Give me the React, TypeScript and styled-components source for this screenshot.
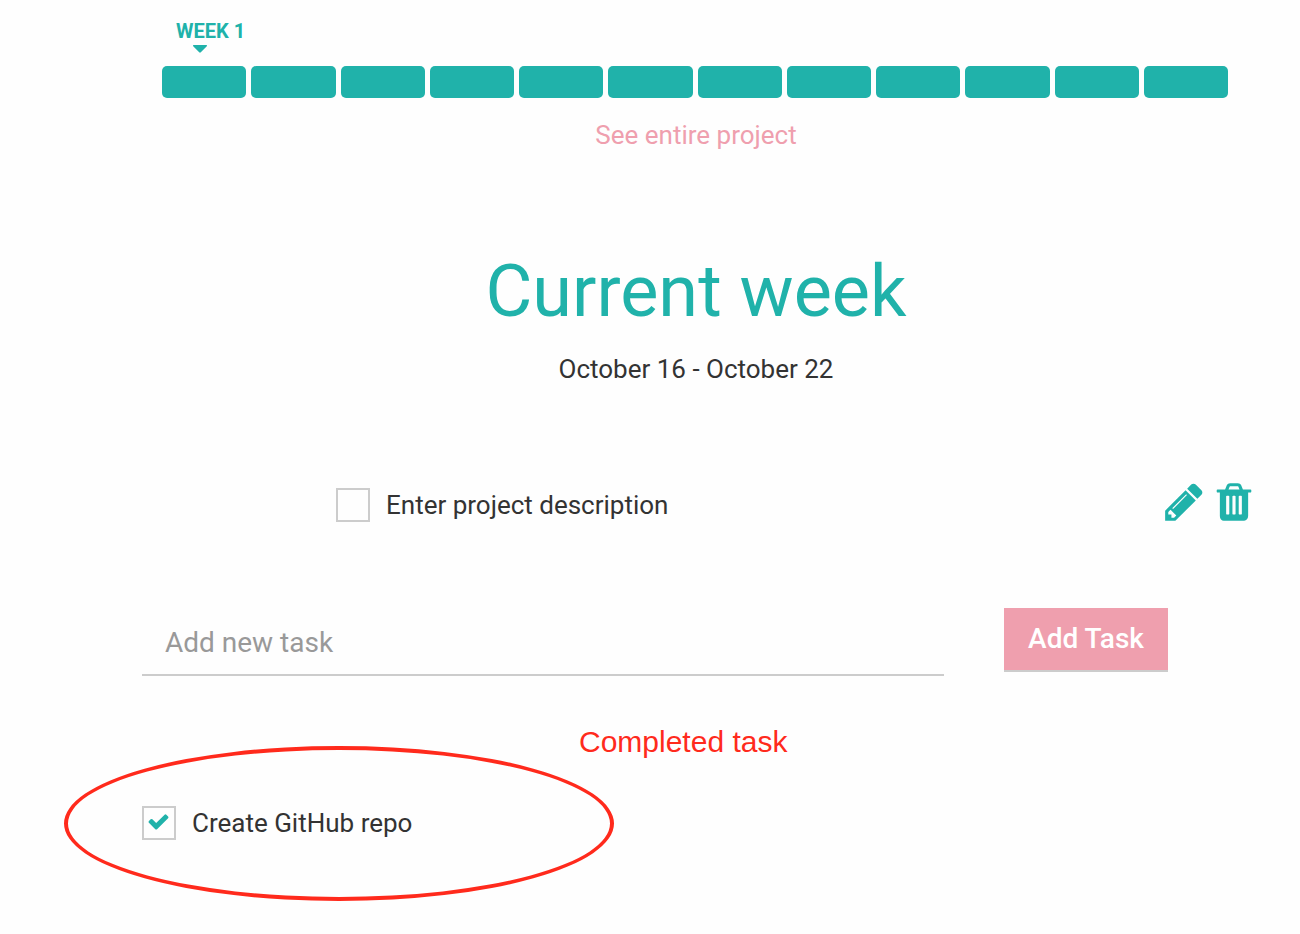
import React, { useState } from "react";
import styled, { createGlobalStyle } from "styled-components";

const teal = "#20b2aa";
const pink = "#ef9fae";
const red = "#ff2a1c";
const rule = "#cccccc";

const GlobalStyle = createGlobalStyle`
  * {
    box-sizing: border-box;
  }
  body {
    margin: 0;
    background: #fefefe;
    color: #333333;
    font-family: Roboto, "Liberation Sans", sans-serif;
    font-size: 26px;
    line-height: 32px;
  }
`;

const Page = styled.main`
  display: flex;
  flex-direction: column;
  padding: 18px 0 92px 92px;
`;

const Timeline = styled.section`
  padding: 0 72px 0 70px;
`;

const WeekMarker = styled.div`
  display: flex;
  flex-direction: column;
  align-items: flex-start;
  height: 48px;
  padding-left: 14px;
  color: ${teal};
  font-size: 20px;
  font-weight: 700;
  line-height: 26px;
`;

const Caret = styled.svg`
  width: 16px;
  height: 9px;
  margin-left: 16px;
  fill: ${teal};
`;

const Weeks = styled.div`
  display: grid;
  grid-template-columns: repeat(12, 1fr);
  gap: 5px;
`;

const WeekBar = styled.button`
  height: 32px;
  padding: 0;
  border: 0;
  border-radius: 5px;
  background: ${teal};
`;

const ProjectLink = styled.a`
  align-self: center;
  margin-top: 21px;
  color: ${pink};
  text-decoration: none;
`;

const WeekHeader = styled.header`
  margin-top: 99px;
  text-align: center;
`;

const Title = styled.h1`
  margin: 0;
  color: ${teal};
  font-size: 72px;
  font-weight: 400;
  line-height: 84px;
`;

const Dates = styled.p`
  margin: 19px 0 0;
`;

const TaskRow = styled.div`
  display: flex;
  justify-content: space-between;
  margin: 95px 44px 0 244px;
`;

const Actions = styled.div`
  display: flex;
  gap: 6px;
`;

const IconButton = styled.button`
  display: block;
  width: 44px;
  height: 44px;
  padding: 0;
  border: 0;
  background: none;
  color: ${teal};
`;

const Glyph = styled.svg`
  display: block;
  width: 100%;
  height: 100%;
  fill: currentColor;
`;

const TaskLabel = styled.label<{ $lowered?: boolean }>`
  display: flex;
  gap: 16px;
  height: 34px;
  margin-top: ${(p) => (p.$lowered ? "8px" : "0")};
  line-height: 34px;
`;

const BoxFrame = styled.span`
  display: grid;
  place-items: center;
  width: 34px;
  height: 34px;

  > * {
    grid-area: 1 / 1;
  }
`;

const Box = styled.input`
  appearance: none;
  width: 34px;
  height: 34px;
  margin: 0;
  border: 2px solid ${rule};
  background: transparent;
`;

const CheckMark = styled.svg`
  width: 23px;
  height: 23px;
  margin: 0 2px 3px 0;
  fill: ${teal};
  pointer-events: none;
`;

const AddForm = styled.form`
  display: flex;
  align-items: flex-start;
  gap: 60px;
  margin: 84px 132px 0 50px;
`;

const TaskInput = styled.input`
  flex: 1;
  min-width: 0;
  height: 68px;
  padding: 2px 23px 0;
  border: 0;
  border-bottom: 2px solid ${rule};
  outline: 0;
  background: transparent;
  color: #333333;
  font: 400 28px Roboto, sans-serif;

  &::placeholder {
    color: #999999;
    opacity: 1;
  }
`;

const AddButton = styled.button`
  width: 164px;
  height: 64px;
  padding: 0 0 2px;
  border: 0;
  border-bottom: 2px solid ${rule};
  background: ${pink};
  color: #ffffff;
  font: 500 28px Roboto, sans-serif;
`;

const CompletedNote = styled.p`
  margin: 50px 0 0 487px;
  color: ${red};
  font-family: "Liberation Sans", Arial, sans-serif;
  font-size: 30px;
`;

const Completed = styled.section`
  position: relative;
  margin: 48px 0 0 50px;
`;

const Highlight = styled.div`
  position: absolute;
  top: -60px;
  left: -78px;
  width: 550px;
  height: 155px;
  border: 4px solid ${red};
  border-radius: 50%;
  pointer-events: none;
`;

const pencil =
  "M491 1536l91-91-235-235-91 91v107h128v128h107zm523-928q0-22-22-22-10 0-17 7l-542 542q-7 7-7 17 0 22 22 22 10 0 17-7l542-542q7-7 7-17zm-54-192l416 416-832 832h-416v-416zm683 96q0 53-37 90l-166 166-416-416 166-165q36-38 90-38 53 0 91 38l235 234q37 39 37 91z";
const trash =
  "M704 1376v-704q0-14-9-23t-23-9h-64q-14 0-23 9t-9 23v704q0 14 9 23t23 9h64q14 0 23-9t9-23zm256 0v-704q0-14-9-23t-23-9h-64q-14 0-23 9t-9 23v704q0 14 9 23t23 9h64q14 0 23-9t9-23zm256 0v-704q0-14-9-23t-23-9h-64q-14 0-23 9t-9 23v704q0 14 9 23t23 9h64q14 0 23-9t9-23zm-544-992h448l-48-117q-7-9-17-11h-317q-10 2-17 11zm928 32v64q0 14-9 23t-23 9h-96v948q0 83-47 143.500t-113 60.500h-832q-66 0-113-58.500t-47-141.500v-952h-96q-14 0-23-9t-9-23v-64q0-14 9-23t23-9h309l70-167q15-37 54-63t79-26h320q40 0 79 26t54 63l70 167h309q14 0 23 9t9 23z";
const check =
  "M1671 566q0 40-28 68l-724 724-136 136q-28 28-68 28t-68-28l-136-136-362-362q-28-28-28-68t28-68l136-136q28-28 68-28t68 28l294 295 656-657q28-28 68-28t68 28l136 136q28 28 28 68z";

interface TaskProps {
  text: string;
  done?: boolean;
  lowered?: boolean;
}

function Task({ text, done = false, lowered }: TaskProps) {
  const [checked, setChecked] = useState(done);
  return (
    <TaskLabel $lowered={lowered}>
      <BoxFrame>
        <Box
          type="checkbox"
          checked={checked}
          onChange={(e) => setChecked(e.target.checked)}
        />
        {checked && (
          <CheckMark viewBox="0 0 1792 1792" aria-hidden="true">
            <path d={check} />
          </CheckMark>
        )}
      </BoxFrame>
      {text}
    </TaskLabel>
  );
}

export default function App() {
  const weeks = Array.from({ length: 12 }, (_, i) => i + 1);
  return (
    <>
      <GlobalStyle />
      <Page>
        <Timeline>
          <WeekMarker>
            WEEK 1
            <Caret viewBox="0 0 16 9" aria-hidden="true">
              <path d="M1.500 1h13q1 0.500 0.300 1.300l-6 6q-0.800 0.700-1.600 0l-6-6q-0.700-0.800 0.300-1.300z" />
            </Caret>
          </WeekMarker>
          <Weeks>
            {weeks.map((week) => (
              <WeekBar key={week} type="button" aria-label={`Week ${week}`} />
            ))}
          </Weeks>
        </Timeline>
        <ProjectLink href="#project">See entire project</ProjectLink>

        <WeekHeader>
          <Title>Current week</Title>
          <Dates>October 16 - October 22</Dates>
        </WeekHeader>

        <TaskRow>
          <Task text="Enter project description" lowered />
          <Actions>
            <IconButton type="button" aria-label="Edit task">
              <Glyph viewBox="0 0 1792 1792" aria-hidden="true">
                <path d={pencil} />
              </Glyph>
            </IconButton>
            <IconButton type="button" aria-label="Delete task">
              <Glyph viewBox="0 0 1792 1792" aria-hidden="true">
                <path d={trash} />
              </Glyph>
            </IconButton>
          </Actions>
        </TaskRow>

        <AddForm onSubmit={(e) => e.preventDefault()}>
          <TaskInput
            type="text"
            aria-label="Add new task"
            placeholder="Add new task"
          />
          <AddButton type="submit">Add Task</AddButton>
        </AddForm>

        <CompletedNote>Completed task</CompletedNote>
        <Completed>
          <Task text="Create GitHub repo" done />
          <Highlight />
        </Completed>
      </Page>
    </>
  );
}
